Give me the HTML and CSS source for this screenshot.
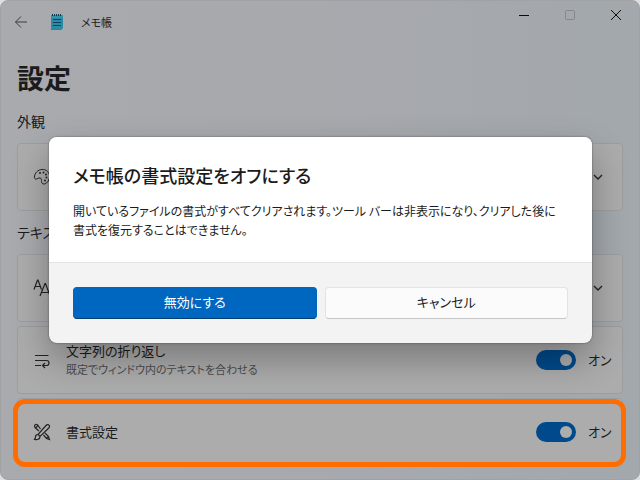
FILE: index.html
```html
<!DOCTYPE html>
<html lang="ja">
<head>
<meta charset="utf-8">
<meta name="viewport" content="width=device-width, initial-scale=1">
<title>メモ帳</title>
<link rel="stylesheet" href="styles.css">
</head>
<body>
<div class="window">
  <header class="titlebar">
    <button class="icon-button" type="button" aria-label="戻る">
      <svg width="14" height="14" viewBox="0 0 14 14" fill="none" stroke="#3c3c3e"><path d="M7 1.5 1.5 7 7 12.5M1.5 7H13"/></svg>
    </button>
    <svg class="app-icon" width="14" height="18" viewBox="0 0 14 18" aria-hidden="true">
      <path d="M1 16h12v1H1z" fill="#9a6426"/><path d="M11 14h2v3l-2-1z" fill="#c9c1b4"/>
      <rect x="1" y="2" width="12" height="14" rx="1" fill="#2b8aa6"/>
      <path d="M1 3a1 1 0 0 1 1-1h10a1 1 0 0 1 1 1v2H1z" fill="#3292aa"/>
      <path d="M2.500 1v2M4.500 1v2M6.500 1v2M8.500 1v2M10.500 1v2" stroke="#14394f"/>
      <path d="M3 6.500h8M3 9.500h8M3 12.500h8" stroke="#0e4361"/>
    </svg>
    <span class="app-name">メモ帳</span>
    <div class="caption">
      <button class="caption-button" type="button" aria-label="最小化"><svg width="12" height="12" viewBox="0 0 12 12"><path d="M1 6.500h10" stroke="#0c0c0c"/></svg></button>
      <button class="caption-button" type="button" aria-label="最大化" disabled><svg width="12" height="12" viewBox="0 0 12 12"><rect x="1.500" y="1.500" width="9" height="9" rx="1" fill="none" stroke="#85878a"/></svg></button>
      <button class="caption-button" type="button" aria-label="閉じる"><svg width="12" height="12" viewBox="0 0 12 12"><path d="m1 1 10 10M11 1 1 11" stroke="#0c0c0c"/></svg></button>
    </div>
  </header>

  <main class="settings">
    <h1 class="page-title">設定</h1>
    <h2 class="section-title">外観</h2>
    <div class="card">
      <svg class="card-icon" width="18" height="18" viewBox="0 0 18 18" fill="none" stroke="#242424"><path d="M1.500 8C2.500 3.500 6.500 1 10.500 1.500 14.500 2 17 5.500 16.500 9.500c-.5 3.500-3 6.500-5.500 6.500-2.500 0-2.500-2-2.500-3.500 0-2-1-3-2.500-2.500-1.500.5-2.500 1.500-3.500 1C1.500 10.500 1.200 9.500 1.500 8z"/><g fill="#242424" stroke="none"><circle cx="7" cy="5" r="1"/><circle cx="10.500" cy="4.500" r="1"/><circle cx="13" cy="6.500" r="1"/><circle cx="13.500" cy="9.500" r="1"/><circle cx="12" cy="12.500" r="1"/></g></svg>
      <button class="expand" type="button" aria-label="展開"><svg width="10" height="6" viewBox="0 0 10 6" fill="none" stroke="#242424" stroke-width="1.400"><path d="m1 1 4 4 4-4"/></svg></button>
    </div>
    <h2 class="section-title">テキスト</h2>
    <div class="stack">
      <div class="card">
        <svg class="card-icon" width="18" height="18" viewBox="0 0 18 18" fill="none" stroke="#242424" stroke-width="1.200"><path d="M1 10.500 4.500 1h.5l3.500 9.500M2.300 7.500h5M7 17 12 4.500h.5l4.800 13M8.600 13.500h7.200"/></svg>
        <button class="expand" type="button" aria-label="展開"><svg width="10" height="6" viewBox="0 0 10 6" fill="none" stroke="#242424" stroke-width="1.400"><path d="m1 1 4 4 4-4"/></svg></button>
      </div>
      <div class="card">
        <svg class="card-icon" width="18" height="18" viewBox="0 0 18 18" fill="none" stroke="#242424" stroke-width="1.200"><path d="M2 4.500h13.500M2 9.500h11.500a2.500 2.500 0 0 1 0 5H10M2 14.500h6M12 12l-2.500 2.500L12 17"/></svg>
        <label class="card-text" for="wrap">
          <span>文字列の折り返し</span>
          <small class="hint">既定でウィンドウ内のテキストを合わせる</small>
        </label>
        <input class="toggle" type="checkbox" role="switch" id="wrap" checked>
        <span class="state">オン</span>
      </div>
      <div class="card card-highlight">
        <svg class="card-icon" width="18" height="18" viewBox="0 0 18 18" fill="none" stroke="#242424" stroke-width="1.200"><path d="M7.500 6 4.500 1.800C3.500.8 1.500 1.500 1.500 3c0 .8.500 1.500 1 2L6 8M10.500 12l3 3.500 3 1-1-3-3.500-3.500M2.500 5 5 2.500M13.500 15.500l2-2M16 2.200c-.8-.9-2-.7-3 .3L5 11.500 7 13.500 15.800 5c.9-.9 1-2 .2-2.800zM5 11.500c-2 0-2.500 1-2.500 2.500 0 1-.5 1.800-1 2.300 2.500.7 5.500 0 5.500-2.800"/></svg>
        <label class="card-text" for="format">書式設定</label>
        <input class="toggle" type="checkbox" role="switch" id="format" checked>
        <span class="state">オン</span>
      </div>
    </div>
  </main>

  <div class="overlay">
    <section class="dialog" role="dialog" aria-modal="true" aria-labelledby="dialog-title">
      <div class="dialog-body">
        <h2 class="dialog-title" id="dialog-title">メモ帳の書式設定をオフにする</h2>
        <p class="dialog-text">開いているファイルの書式がすべてクリアされます。ツール バーは非表示になり、クリアした後に<br>書式を復元することはできません。</p>
      </div>
      <footer class="dialog-actions">
        <button class="button button-primary" type="button">無効にする</button>
        <button class="button" type="button">キャンセル</button>
      </footer>
    </section>
  </div>
</div>
</body>
</html>
```
FILE: styles.css
```css
* {
  box-sizing: border-box;
}

body {
  margin: 0;
  background: #dedede;
  color: #1b1b1b;
  font-family: "Noto Sans CJK JP", sans-serif;
  font-size: 13px;
  font-feature-settings: "palt";
  line-height: 20px;
}

button {
  padding: 0;
  border: 0;
  background: none;
  color: inherit;
  font: inherit;
  font-feature-settings: inherit;
}

svg {
  display: block;
}

.window {
  position: relative;
  min-height: 100vh;
  overflow: hidden;
  border: 1px solid #a0a2a4;
  border-radius: 8px;
  background: linear-gradient(90deg, #a9aaae, #a7a9ad 50%, #a3a8ad);
}

.titlebar {
  display: flex;
  align-items: center;
  height: 41px;
  padding-left: 13px;
}

.app-icon {
  margin-left: 22px;
}

.app-name {
  margin-left: 17px;
  font-size: 11px;
}

.caption {
  display: flex;
  align-self: flex-start;
  margin-left: auto;
}

.caption-button {
  display: grid;
  place-items: center;
  width: 46px;
  height: 28px;
}

.settings {
  padding: 16px 16px 12px;
}

.page-title {
  margin: 0 0 2px;
  font-size: 27px;
  font-weight: 700;
  line-height: 40px;
}

.section-title {
  margin: 0;
  padding: 11px 0 12px;
  font-size: 14px;
  font-weight: 400;
  line-height: 20px;
}

.stack {
  display: grid;
  gap: 4px;
}

.card {
  position: relative;
  display: flex;
  align-items: center;
  min-height: 68px;
  padding: 0 13px 0 15px;
  border: 1px solid #9c9d9f;
  border-radius: 4px;
  background: #acacad;
}

.card-highlight::after {
  content: "";
  position: absolute;
  inset: 0 -4px -2px -5px;
  border: 5px solid #ff6d00;
  border-radius: 12px;
  pointer-events: none;
}

.card-text {
  display: grid;
  margin: 0 auto 0 15px;
  line-height: 18px;
}

.hint {
  color: #4b4b4c;
  font-size: 11px;
}

.expand {
  margin: 0 6px 0 auto;
}

.toggle {
  appearance: none;
  display: flex;
  align-items: center;
  justify-content: flex-end;
  width: 40px;
  height: 20px;
  margin: 0 12px 0 0;
  padding: 0 4px;
  border-radius: 10px;
  background: #004a8b;
}

.toggle::before {
  content: "";
  width: 12px;
  height: 12px;
  border-radius: 50%;
  background: #adadae;
}

.toggle:not(:checked) {
  justify-content: flex-start;
}

.state {
  width: 21px;
  white-space: nowrap;
}

.overlay {
  position: absolute;
  inset: 0;
  display: grid;
  place-items: center;
  padding: 0 47px 0 48px;
}

.dialog {
  width: 100%;
  max-width: 543px;
  overflow: hidden;
  border-radius: 8px;
  background: #f3f3f3;
  box-shadow: 0 0 2px rgb(0 0 0 / 50%), 0 16px 36px rgb(0 0 0 / 30%);
}

.dialog-body {
  padding: 24px 24px 23px;
  border-bottom: 1px solid #e3e3e3;
  background: #fff;
}

.dialog-title {
  margin: 0 0 12px;
  font-size: 18px;
  font-weight: 500;
  line-height: 28px;
}

.dialog-text {
  margin: 0;
  font-size: 12px;
  line-height: 19px;
  white-space: nowrap;
}

.dialog-actions {
  display: grid;
  grid-template-columns: 1fr 1fr;
  gap: 8px;
  padding: 24px;
}

.button {
  height: 32px;
  padding-bottom: 2px;
  border: 1px solid #e3e3e3;
  border-bottom-color: #c6c6c6;
  border-radius: 4px;
  background: #fbfbfb;
}

.button-primary {
  border-color: #0067c0;
  border-bottom-color: #003e73;
  background: #0067c0;
  color: #fff;
}
```
